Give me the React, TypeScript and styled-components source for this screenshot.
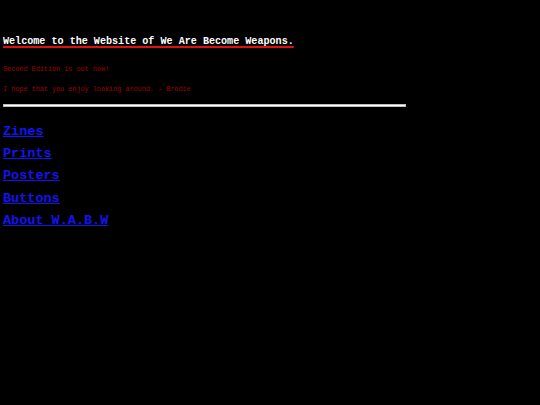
import React from 'react';
import styled, {createGlobalStyle} from 'styled-components';

const GlobalStyle = createGlobalStyle`
  html, body {
    background: #000;
  }
  body {
    margin: 3px;
    font-family: "Liberation Mono", "DejaVu Sans Mono", monospace;
  }
`;

const Page = styled.div`
  display: flex;
  flex-direction: column;
`;

const Title = styled.h1`
  margin: 32px 0 0 0;
  font-size: 10.1px;
  line-height: 14px;
  font-weight: bold;
  color: #fff;
  span {
    text-decoration: underline;
    text-decoration-color: #e01010;
    text-decoration-thickness: 2px;
    text-underline-offset: 2px;
  }
`;

const Note = styled.p<{$first?: boolean}>`
  margin: ${p => (p.$first ? '15px' : '10px')} 0 0 0;
  font-size: 6.8px;
  line-height: 10px;
  color: #a00000;
`;

const Rule = styled.hr`
  width: 401px;
  margin: 10px 0 0 0;
  height: 1px;
  border: 1px solid #bbb;
  background: #fff;
`;

const Nav = styled.nav`
  display: flex;
  flex-direction: column;
  margin-top: 14px;
`;

const NavLink = styled.a`
  font-size: 13.5px;
  line-height: 22.2px;
  font-weight: bold;
  color: #1414f0;
  text-decoration: underline;
  width: fit-content;
`;

const links = ['Zines', 'Prints', 'Posters', 'Buttons', 'About W.A.B.W'];

const App = () => {
  return (
    <Page>
      <GlobalStyle />
      <Title>
        <span>Welcome to the Website of We Are Become Weapons.</span>
      </Title>
      <Note $first>Second Edition is out now!</Note>
      <Note>I hope that you enjoy looking around. - Brodie</Note>
      <Rule />
      <Nav>
        {links.map(l => (
          <NavLink key={l} href="#">
            {l}
          </NavLink>
        ))}
      </Nav>
    </Page>
  );
};

export default App;
